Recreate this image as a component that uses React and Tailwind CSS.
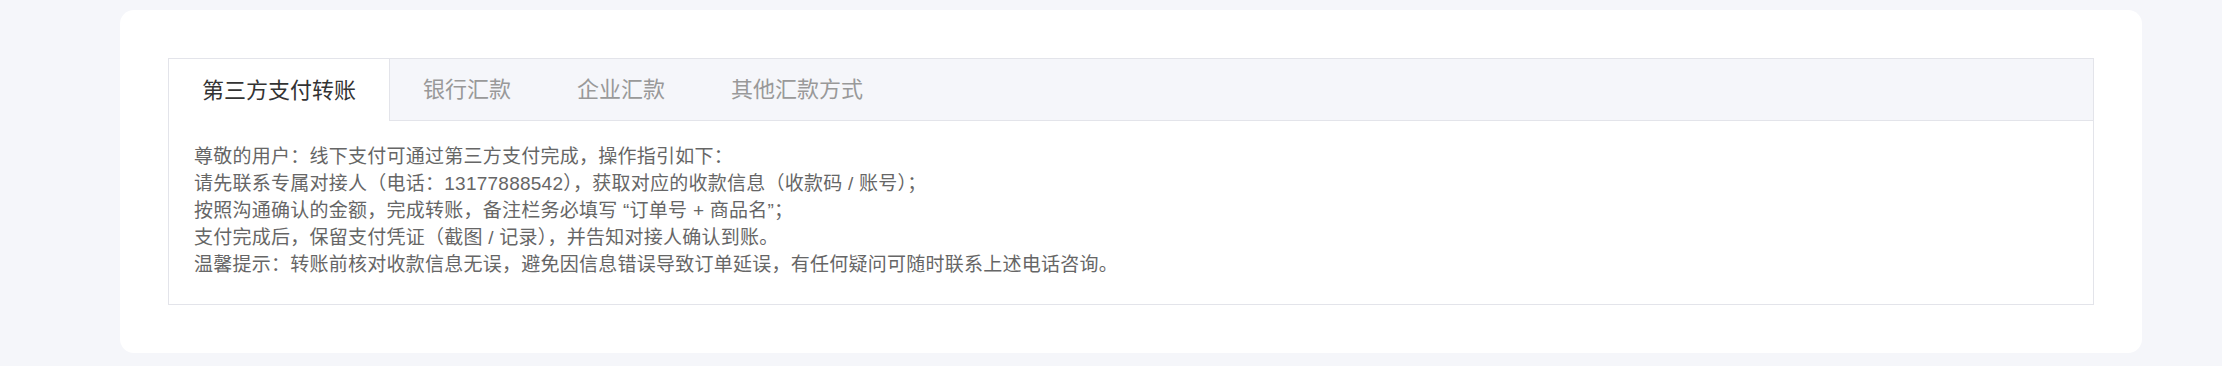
import React, { useState } from "react";

const tabs = ["第三方支付转账", "银行汇款", "企业汇款", "其他汇款方式"];

const lines = [
  "尊敬的用户：线下支付可通过第三方支付完成，操作指引如下：",
  "请先联系专属对接人（电话：13177888542），获取对应的收款信息（收款码 / 账号）；",
  "按照沟通确认的金额，完成转账，备注栏务必填写 “订单号 + 商品名”；",
  "支付完成后，保留支付凭证（截图 / 记录），并告知对接人确认到账。",
  "温馨提示：转账前核对收款信息无误，避免因信息错误导致订单延误，有任何疑问可随时联系上述电话咨询。",
];

export default function App() {
  const [active, setActive] = useState(0);

  return (
    <div
      lang="zh-CN"
      className="min-h-[366px] bg-[#f5f6fa] pl-[120px] pr-[80px] pt-[10px] pb-[13px]"
      style={{ fontFamily: '"Liberation Sans", "Noto Sans CJK SC", sans-serif' }}
    >
      <div className="bg-white rounded-[14px] px-12 py-12">
        <div className="border border-[#e3e4ea]">
          {/* Tabs */}
          <div className="flex h-[62px] bg-[#f5f6fa]">
            {tabs.map((t, i) =>
              i === active ? (
                <button
                  key={t}
                  onClick={() => setActive(i)}
                  className={`flex items-center px-[33px] text-[22px] text-[#333] bg-white ${
                    i > 0 ? "border-l border-[#e3e4ea]" : ""
                  } border-r border-[#e3e4ea]`}
                >
                  {t}
                </button>
              ) : (
                <button
                  key={t}
                  onClick={() => setActive(i)}
                  className="flex items-center px-[33px] text-[22px] text-[#999] border-b border-[#e3e4ea]"
                >
                  {t}
                </button>
              )
            )}
            <div className="flex-1 border-b border-[#e3e4ea]"></div>
          </div>
          {/* Content */}
          <div className="px-[25px] pt-[22px] pb-[26px] text-[19px] leading-[27px] tracking-[0.25px] text-[#666]">
            {lines.map((l, i) => (
              <p key={i}>{l}</p>
            ))}
          </div>
        </div>
      </div>
    </div>
  );
}
